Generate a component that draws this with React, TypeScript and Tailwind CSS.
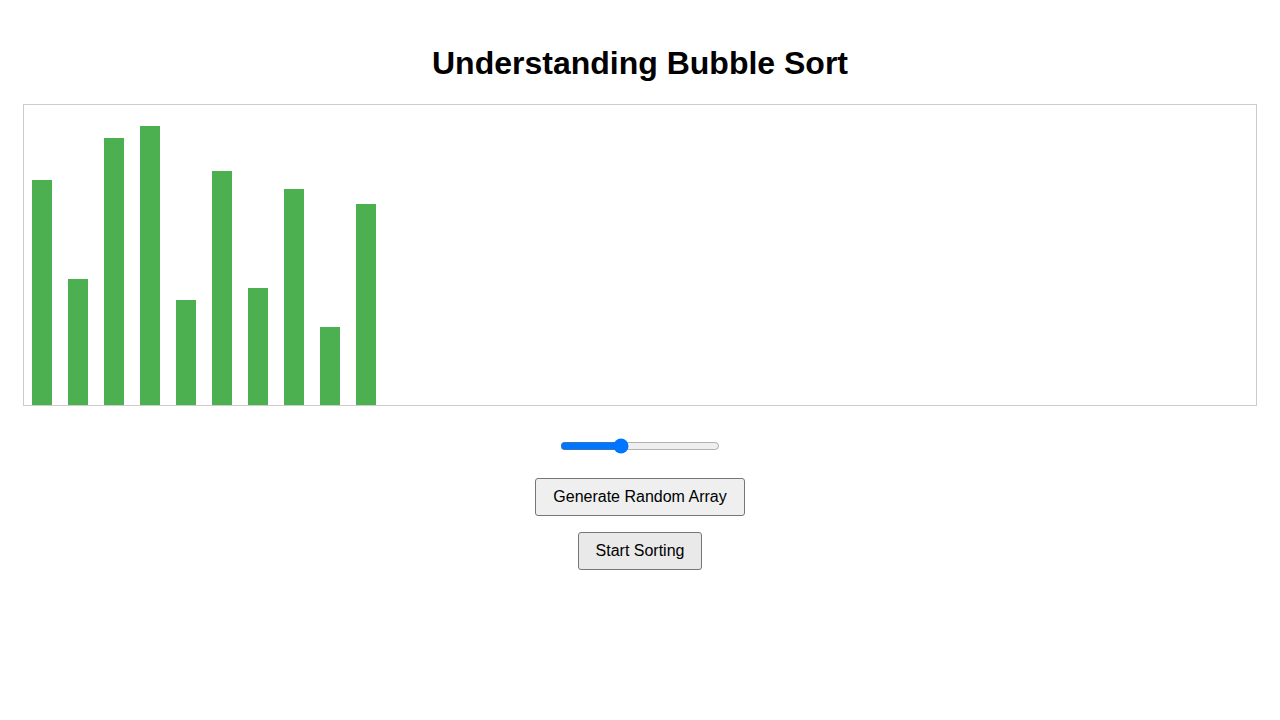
import React from "react";

const values = [75, 42, 89, 93, 35, 78, 39, 72, 26, 67];

export default function App() {
  return (
    <div className="min-h-[720px] bg-white pt-[45px] text-black" style={{ fontFamily: '"Liberation Sans", Arial, sans-serif' }}>
      <h1 className="m-0 text-center text-[32px] font-bold leading-[37px]">Understanding Bubble Sort</h1>
      <div className="mx-[23px] mt-[22px] flex h-[302px] items-end border border-[#cccccc] px-[8px]">
        {values.map((v, i) => (
          <div key={i} className="mr-[16px] w-[20px] bg-[#4caf50]" style={{ height: v * 3 }} />
        ))}
      </div>
      <div className="mt-[32px] flex justify-center">
        <input type="range" min={50} max={1000} defaultValue={400} className="m-0 h-[16px] w-[160px]" />
      </div>
      <div className="mt-[24px] flex justify-center">
        <button className="rounded-[3px] border border-[#767676] bg-[#efefef] px-[17px] py-[9px] text-[16px] leading-[18px] text-black">
          Generate Random Array
        </button>
      </div>
      <div className="mt-[16px] flex justify-center">
        <button className="rounded-[3px] border border-[#767676] bg-[#e9e9e9] px-[17px] py-[9px] text-[16px] leading-[18px] text-black">
          Start Sorting
        </button>
      </div>
    </div>
  );
}
